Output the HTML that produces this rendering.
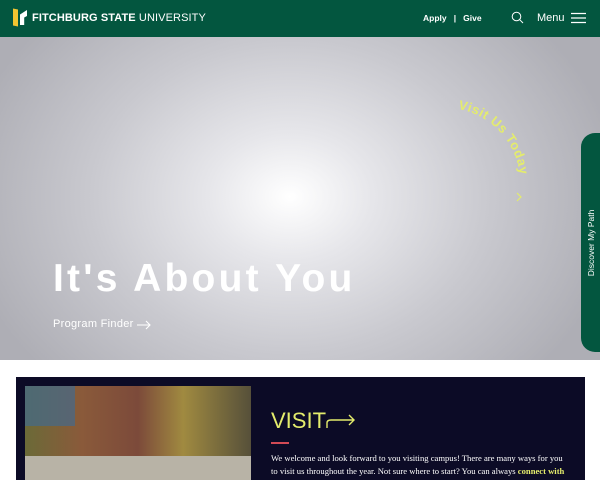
<!DOCTYPE html>
<html><head><style>
body{margin:0;width:600px;height:480px;overflow:hidden;background:#fff;font-family:"Liberation Sans",sans-serif;position:relative}
.hdr{position:absolute;left:0;top:0;width:600px;height:37px;background:#03563f}
.hero{position:absolute;left:0;top:37px;width:600px;height:323px;background:radial-gradient(ellipse 330px 260px at 290px 160px,#ffffff 0%,#e6e6ea 25%,#c9c9cf 60%,#aeaeb5 100%)}
.box{position:absolute;left:16px;top:377px;width:569px;height:103px;background:#0c0b26}
.photo{position:absolute;left:25px;top:386px;width:226px;height:94px;background:linear-gradient(90deg,#6b6a38 0%,#8a5a3a 25%,#7c4a3a 50%,#a08a40 70%,#56503a 100%)}
</style></head><body>
<div class="hdr">
 <div style="position:absolute;left:13px;top:9px;width:5px;height:17px;background:#f2c531;transform:skewY(10deg)"></div>
 <div style="position:absolute;left:20px;top:10px;width:7px;height:15px;background:#fff;clip-path:polygon(0 30%,100% 0,100% 40%,60% 50%,60% 100%,0 100%)"></div>
 <div style="position:absolute;left:32px;top:12px;color:#fff;font-size:11px;letter-spacing:0.1px"><b>FITCHBURG STATE</b> UNIVERSITY</div>
 <div style="position:absolute;left:423px;top:13px;color:#fff;font-size:8.5px;font-weight:bold">Apply &nbsp;&nbsp;|&nbsp;&nbsp; Give</div>
 <svg style="position:absolute;left:511px;top:11px" width="13" height="13"><circle cx="5.5" cy="5.5" r="4.3" stroke="#fff" fill="none" stroke-width="1"/><line x1="8.7" y1="8.7" x2="12" y2="12" stroke="#fff" stroke-width="1"/></svg>
 <div style="position:absolute;left:537px;top:12px;color:#fff;font-size:11px">Menu</div>
 <svg style="position:absolute;left:571px;top:12px" width="15" height="12"><path d="M0 1.5H15M0 6H15M0 10.5H15" stroke="#fff" stroke-width="1.3"/></svg>
</div>
<div class="hero">
 <div style="position:absolute;left:53px;top:220px;color:#fff;font-size:39px;font-weight:bold;letter-spacing:3.2px">It's About You</div>
 <div style="position:absolute;left:53px;top:281px;color:#fff;font-size:11px;letter-spacing:0.3px">Program Finder</div>
 <svg style="position:absolute;left:136px;top:281px" width="16" height="12"><path d="M1 7H14M10 3L14 7L10 11" stroke="#fff" fill="none" stroke-width="1.1"/></svg>
 <svg style="position:absolute;left:440px;top:50px" width="110" height="170">
  <defs><path id="arc" d="M18 22 A75 75 0 0 1 80 100"/></defs>
  <text font-size="13" font-weight="bold" fill="#e4ec6c" font-family="Liberation Sans,sans-serif" letter-spacing="0.6"><textPath href="#arc">Visit Us Today</textPath></text>
  <path d="M77 106L81 110L77 114" stroke="#e4ec6c" fill="none" stroke-width="1.2"/>
 </svg>
 <div style="position:absolute;left:581px;top:96px;width:30px;height:219px;background:#03563f;border-radius:14px 0 0 14px"></div>
 <div style="position:absolute;left:591px;top:206px;color:#fff;font-size:8.5px;transform:translate(-50%,-50%) rotate(-90deg);white-space:nowrap">Discover My Path</div>
</div>
<div class="box"></div>
<div class="photo">
 <div style="position:absolute;left:0;top:0;width:50px;height:40px;background:#3a6a9a;opacity:.6"></div>
 <div style="position:absolute;left:0;top:70px;width:226px;height:24px;background:#b8b3a6"></div>
</div>
<div style="position:absolute;left:271px;top:408px;color:#e4ec6c;font-size:22px">VISIT</div>
<svg style="position:absolute;left:326px;top:412px" width="30" height="18"><path d="M1 16V11Q1 8 5 8H28M23 3L28 8L23 13" stroke="#e4ec6c" fill="none" stroke-width="1.4"/></svg>
<div style="position:absolute;left:271px;top:442px;width:18px;height:1.5px;background:#d24a55"></div>
<div style="position:absolute;left:271px;top:452px;width:298px;color:#fff;font-family:'Liberation Serif',serif;font-size:8.6px;line-height:12.5px">We welcome and look forward to you visiting campus! There are many ways for you to visit us throughout the year. Not sure where to start? You can always <b style="color:#e4ec6c">connect with</b></div>
</body></html>
